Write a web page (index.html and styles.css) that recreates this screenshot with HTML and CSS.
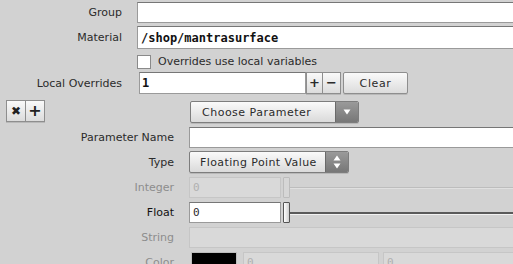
FILE: index.html
```html
<!DOCTYPE html>
<html>
<head>
<meta charset="utf-8">
<link rel="stylesheet" href="styles.css">
</head>
<body>
<div class="page">
  <div class="sec1">
    <div class="row r-group">
      <span class="lbl">Group</span>
      <div class="field"></div>
    </div>
    <div class="row r-mat">
      <span class="lbl">Material</span>
      <div class="field mono">/shop/mantrasurface</div>
    </div>
    <div class="row r-chk">
      <span class="lbl"></span>
      <span class="check"></span>
      <span class="chk-text">Overrides use local variables</span>
    </div>
    <div class="row r-lo">
      <span class="lbl">Local Overrides</span>
      <div class="field mono lo">1</div>
      <div class="pm">
        <button class="btn pm-b">+</button><button class="btn pm-b minus">&minus;</button>
      </div>
      <button class="btn clear">Clear</button>
    </div>
  </div>

  <div class="sec2">
    <div class="cell-left">
      <div class="xp">
        <button class="btn xp-b">&#x2716;</button><button class="btn xp-b plus">+</button>
      </div>
    </div>
    <div class="cell">
      <div class="combo choose">
        <span class="combo-text">Choose Parameter</span>
        <span class="combo-arrow">
          <svg width="8" height="6" viewBox="0 0 8 6"><path d="M0.5 0.5 L7.5 0.5 L4 5.5 Z" fill="#fff"/></svg>
        </span>
      </div>
    </div>

    <span class="lbl2">Parameter Name</span>
    <div class="cell"><div class="field wide"></div></div>

    <span class="lbl2">Type</span>
    <div class="cell">
      <div class="combo type">
        <span class="combo-text">Floating Point Value</span>
        <span class="combo-arrow">
          <svg width="8" height="14" viewBox="0 0 8 14"><path d="M4 0.5 L7.5 5.5 L0.5 5.5 Z M0.5 8.5 L7.5 8.5 L4 13.5 Z" fill="#fff"/></svg>
        </span>
      </div>
    </div>

    <span class="lbl2 dis">Integer</span>
    <div class="cell slider-row">
      <div class="field num disabled">0</div>
      <span class="handle h-dis"></span>
      <span class="track t-dis"></span>
    </div>

    <span class="lbl2 act">Float</span>
    <div class="cell slider-row">
      <div class="field num">0</div>
      <span class="handle"></span>
      <span class="track"></span>
    </div>

    <span class="lbl2 dis">String</span>
    <div class="cell"><div class="field wide disabled"></div></div>

    <span class="lbl2 dis">Color</span>
    <div class="cell color-row">
      <span class="swatch"></span>
      <div class="field disabled cval">0</div>
      <div class="field disabled cval">0</div>
    </div>
  </div>
</div>
</body>
</html>
```

FILE: styles.css
```css
html, body {
  margin: 0;
  padding: 0;
  overflow: hidden;
  background: #d2d2d2;
}
body {
  font-family: "DejaVu Sans", sans-serif;
  font-size: 11px;
  color: #2b2b2b;
}
.page {
  width: 540px;
}
button {
  font-family: "DejaVu Sans", sans-serif;
  font-size: 11px;
  color: #2b2b2b;
  margin: 0;
  padding: 0;
}
.btn {
  background: linear-gradient(#fafafa, #dcdcdc);
  border: 1px solid #8e8e8e;
  border-radius: 2px;
  box-shadow: 0 1px 0 rgba(0,0,0,0.12);
}

/* section 1 */
.sec1 {
  padding-top: 2px;
}
.row {
  display: flex;
  align-items: center;
  column-gap: 15px;
}
.lbl {
  width: 122px;
  flex: none;
  text-align: right;
}
.field {
  box-sizing: border-box;
  height: 21px;
  background: #fff;
  border: 1px solid #9a9a9a;
  border-top-color: #767676;
  flex: 1;
  display: flex;
  align-items: center;
  padding-left: 3px;
}
.r-group .field { height: 21px; }
.r-mat { margin-top: 3px; }
.r-mat .field { height: 23px; }
.mono {
  font-family: "DejaVu Sans Mono", monospace;
  font-weight: bold;
  font-size: 12px;
  color: #111;
}
.r-chk {
  height: 22px;
  margin-top: 1px;
  column-gap: 0;
}
.r-chk .lbl { margin-right: 15px; }
.check {
  box-sizing: border-box;
  width: 14px;
  height: 14px;
  background: #fff;
  border: 1px solid #8a8a8a;
  margin-top: 2px;
}
.chk-text {
  margin-left: 7px;
  margin-top: 1px;
}
.r-lo {
  margin-top: 0;
  column-gap: 0;
}
.r-lo .lbl { margin-right: 17px; }
.field.lo {
  flex: none;
  width: 167px;
  height: 22px;
  padding-left: 2px;
}
.pm {
  display: flex;
  margin-left: 0;
}
.pm-b {
  width: 17px;
  height: 22px;
  font-weight: bold;
  font-size: 13px;
  border-radius: 0;
  line-height: 18px;
}
.pm-b.minus { width: 18px; border-left: none; }
.clear {
  width: 65px;
  height: 22px;
  margin-left: 2px;
  letter-spacing: 0.6px;
}

/* section 2 */
.sec2 {
  display: grid;
  grid-template-columns: 174px 1fr;
  column-gap: 15px;
  grid-auto-rows: 22px;
  row-gap: 3.17px;
  margin-top: 7px;
}
.lbl2 {
  text-align: right;
  align-self: center;
}
.lbl2.dis { color: #8d8d8d; }
.lbl2.act { color: #111; }
.cell-left {
  display: flex;
  align-items: center;
}
.cell {
  display: flex;
  align-items: center;
  min-width: 0;
}
.xp {
  display: flex;
  margin-left: 6px;
  margin-top: -3px;
}
.xp-b {
  width: 20px;
  height: 22px;
  font-size: 12px;
  font-weight: bold;
  color: #222;
  border-radius: 0;
}
.xp-b.plus {
  width: 19px;
  border-left: none;
  font-size: 16px;
  line-height: 18px;
}
.combo {
  box-sizing: border-box;
  height: 22px;
  display: flex;
  border: 1px solid #7d7d7d;
  border-radius: 2px;
  background: linear-gradient(#fafafa, #dadada);
  box-shadow: 0 1px 0 rgba(0,0,0,0.12);
  overflow: hidden;
}
.combo.choose { width: 169px; margin-left: 1px; }
.combo.type { width: 160px; }
.combo-text {
  flex: 1;
  display: flex;
  align-items: center;
  letter-spacing: 0.5px;
}
.choose .combo-text { padding-left: 11px; }
.type .combo-text { padding-left: 10px; letter-spacing: 0.4px; }
.combo-arrow {
  width: 22px;
  display: flex;
  align-items: center;
  justify-content: center;
  background: linear-gradient(#9a9a9a, #777);
  border-left: 1px solid #6a6a6a;
}
.field.wide { flex: 1; }
.field.num {
  flex: none;
  width: 92px;
  font-family: "DejaVu Sans Mono", monospace;
  font-size: 11px;
  padding-left: 3px;
}
.field.disabled {
  background: #d9d9d9;
  border-color: #c6c6c6;
  color: #b0b0b0;
}
.slider-row { position: relative; }
.handle {
  box-sizing: border-box;
  width: 7px;
  height: 21px;
  margin-left: 2px;
  border: 1px solid #555;
  border-radius: 1px;
  background: linear-gradient(90deg, #fff, #cfcfcf);
  flex: none;
}
.handle.h-dis {
  border-color: #bcbcbc;
  background: #d6d6d6;
}
.track {
  flex: 1;
  height: 2px;
  background: #5a5a5a;
  border-bottom: 1px solid #f2f2f2;
  margin-top: 1px;
}
.track.t-dis {
  background: #bdbdbd;
  border-bottom-color: #e0e0e0;
  height: 1px;
}
.color-row {
  align-items: flex-start;
  column-gap: 4px;
}
.swatch {
  box-sizing: border-box;
  width: 46px;
  height: 22px;
  margin-left: 2px;
  background: #000;
  border: 1px solid #bdbdbd;
  flex: none;
}
.cval {
  flex: none;
  width: 136px;
  margin-left: 2px;
  font-family: "DejaVu Sans Mono", monospace;
  font-size: 11px;
}
.cval + .cval { margin-left: 0; }
```
